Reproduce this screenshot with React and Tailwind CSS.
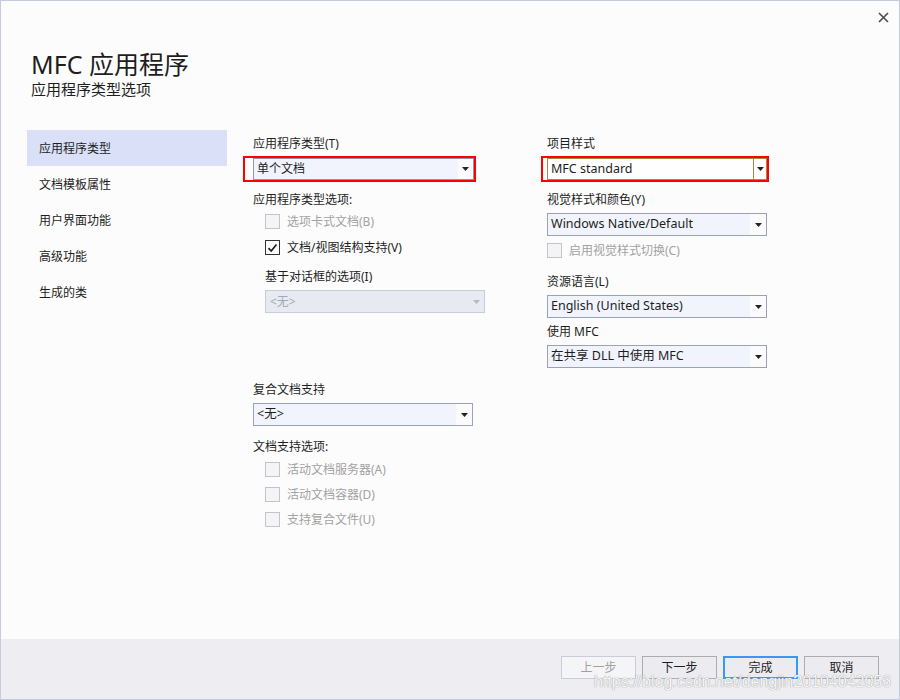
const font = { fontFamily: '"Noto Sans", "Noto Sans CJK SC", sans-serif' }

const Arrow = ({ disabled }) => (
  <svg width="7" height="4" viewBox="0 0 7 4">
    <path d="M0 0h7L3.5 4z" fill={disabled ? '#b4b8c4' : '#222'} />
  </svg>
)

const Combo = ({ text, w = 'w-[220px]', disabled, focused }) => {
  if (disabled) {
    return (
      <div className={`${w} h-[23px] flex border border-[#c8ccd8] bg-[#e8eaf1]`}>
        <div className="flex-1 flex items-center pl-[4px] text-[12px] text-[#a4a8b4]">{text}</div>
        <div className="w-[16px] flex items-center justify-center"><Arrow disabled /></div>
      </div>
    )
  }
  if (focused) {
    return (
      <div className={`${w} h-[22px] flex border border-[#a88848] bg-[#fefefe]`}>
        <div className="flex-1 flex items-center pl-[3px] text-[12.5px] text-[#1e1e1e]">{text}</div>
        <div className="w-[13px] flex items-center justify-center border-l border-[#a88848]"><Arrow /></div>
      </div>
    )
  }
  return (
    <div className={`${w} h-[23px] flex border border-[#9aa2b8] bg-[#f1f4fc]`}>
      <div className="flex-1 flex items-center pl-[3px] text-[12.5px] text-[#1e1e1e]">{text}</div>
      <div className="w-[16px] flex items-center justify-center bg-[#fbfbfd]"><Arrow /></div>
    </div>
  )
}

const Check = ({ label, checked, disabled, className = '' }) => (
  <div className={`flex items-center h-[15px] ${className}`}>
    <div
      className={`w-[15px] h-[15px] flex items-center justify-center border ${
        disabled ? 'border-[#c4c4c8] bg-[#f4f4f6]' : 'border-[#333] bg-[#fcfcfc]'
      }`}
    >
      {checked && (
        <svg width="11" height="10" viewBox="0 0 11 10">
          <path d="M1.5 5.2 4.2 8 9.5 1.5" fill="none" stroke="#1e1e1e" strokeWidth="1.7" />
        </svg>
      )}
    </div>
    <span className={`ml-[7px] text-[12px] leading-[15px] ${disabled ? 'text-[#a2a2a2]' : 'text-[#1e1e1e]'}`}>
      {label}
    </span>
  </div>
)

const Label = ({ children, className = '' }) => (
  <div className={`text-[12px] leading-[16px] text-[#1e1e1e] ${className}`}>{children}</div>
)

const navItems = ['应用程序类型', '文档模板属性', '用户界面功能', '高级功能', '生成的类']

const Btn = ({ children, kind }) => {
  const styles = {
    disabled: 'border border-[#c9ccd9] bg-[#f5f5f7] text-[#a0a0a0]',
    normal: 'border border-[#adadad] bg-[#ececf0] text-[#1e1e1e]',
    primary: 'border-2 border-[#3c96f4] bg-[#ececf0] text-[#1e1e1e]',
  }
  return (
    <div className={`w-[75px] h-[23px] flex items-center justify-center text-[12px] ${styles[kind]}`}>
      {children}
    </div>
  )
}

export default function App() {
  return (
    <div style={font} className="relative w-[900px] h-[700px] flex flex-col border border-[#c6cadf] bg-[#fcfcfc] overflow-hidden">
      {/* Top bar */}
      <div className="h-[34px] flex justify-end items-start pt-[11px] pr-[10px]">
        <svg width="11" height="11" viewBox="0 0 11 11">
          <path d="M1 1l9 9M10 1l-9 9" stroke="#4c4c4c" strokeWidth="1.6" />
        </svg>
      </div>

      {/* Title */}
      <div className="pl-[30px] pt-[14px]">
        <div className="text-[25px] leading-[30px] text-[#1e1e1e]">MFC 应用程序</div>
        <div className="text-[15px] leading-[20px] text-[#1e1e1e]">应用程序类型选项</div>
      </div>

      {/* Main */}
      <div className="flex-1 flex items-start mt-[31px] pl-[26px]">
        {/* Sidebar */}
        <div className="w-[200px] flex flex-col">
          {navItems.map((item, i) => (
            <div
              key={item}
              className={`h-[36px] flex items-center pl-[12px] pt-[1px] text-[12px] text-[#1e1e1e] ${
                i === 0 ? 'bg-[#d9e0f8]' : ''
              }`}
            >
              {item}
            </div>
          ))}
        </div>

        {/* Middle column */}
        <div className="w-[298px] ml-[16px] flex flex-col">
          <Label className="mt-[6px] pl-[10px]">应用程序类型(T)</Label>
          <div className="mt-[4px] w-[233px] h-[26px] border-2 border-[#ff0000] pl-[8px] flex items-center">
            <div className="w-[221px] h-[22px] flex border border-[#8e96aa] bg-[#f1f4fc]">
              <div className="flex-1 flex items-center pl-[3px] text-[12px] text-[#1e1e1e]">单个文档</div>
              <div className="w-[15px] flex items-center justify-center bg-[#fbfbfd]"><Arrow /></div>
            </div>
          </div>

          <div className="pl-[10px] flex flex-col">
            <Label className="mt-[10px]">应用程序类型选项:</Label>
            <Check className="mt-[6px] ml-[12px]" label="选项卡式文档(B)" disabled />
            <Check className="mt-[11px] ml-[12px]" label="文档/视图结构支持(V)" checked />
            <Label className="mt-[14px] ml-[12px]">基于对话框的选项(I)</Label>
            <div className="mt-[5px] ml-[12px]">
              <Combo text="<无>" disabled />
            </div>

            <Label className="mt-[69px]">复合文档支持</Label>
            <div className="mt-[5px]">
              <Combo text="<无>" />
            </div>
            <Label className="mt-[13px]">文档支持选项:</Label>
            <Check className="mt-[7px] ml-[12px]" label="活动文档服务器(A)" disabled />
            <Check className="mt-[10px] ml-[12px]" label="活动文档容器(D)" disabled />
            <Check className="mt-[10px] ml-[12px]" label="支持复合文件(U)" disabled />
          </div>
        </div>

        {/* Right column */}
        <div className="w-[228px] flex flex-col">
          <Label className="mt-[6px] pl-[6px]">项目样式</Label>
          <div className="mt-[4px] w-[228px] h-[26px] border-2 border-[#ff0000] pl-[4px] flex items-center">
            <Combo text="MFC standard" focused />
          </div>
          <div className="pl-[6px] flex flex-col">
            <Label className="mt-[10px]">视觉样式和颜色(Y)</Label>
            <div className="mt-[5px]">
              <Combo text="Windows Native/Default" />
            </div>
            <Check className="mt-[7px]" label="启用视觉样式切换(C)" disabled />
            <Label className="mt-[16px]">资源语言(L)</Label>
            <div className="mt-[5px]">
              <Combo text="English (United States)" />
            </div>
            <Label className="mt-[6px]">使用 MFC</Label>
            <div className="mt-[5px]">
              <Combo text="在共享 DLL 中使用 MFC" />
            </div>
          </div>
        </div>
      </div>

      {/* Footer */}
      <div className="h-[60px] bg-[#eeeef2] flex justify-end items-start pt-[17px] pr-[20px] gap-[6px]">
        <Btn kind="disabled">上一步</Btn>
        <Btn kind="normal">下一步</Btn>
        <Btn kind="primary">完成</Btn>
        <Btn kind="normal">取消</Btn>
      </div>

      {/* Watermark */}
      <div
        className="absolute left-[593px] top-[671px] text-[16px] leading-[19px] text-white/90 [text-shadow:0_0_1px_#a0a0a0,0_0_1px_#a0a0a0]"
        style={{ fontFamily: '"Liberation Sans", Arial, sans-serif' }}
      >
        https://blog.csdn.net/dengjin20104042056
      </div>
    </div>
  )
}
